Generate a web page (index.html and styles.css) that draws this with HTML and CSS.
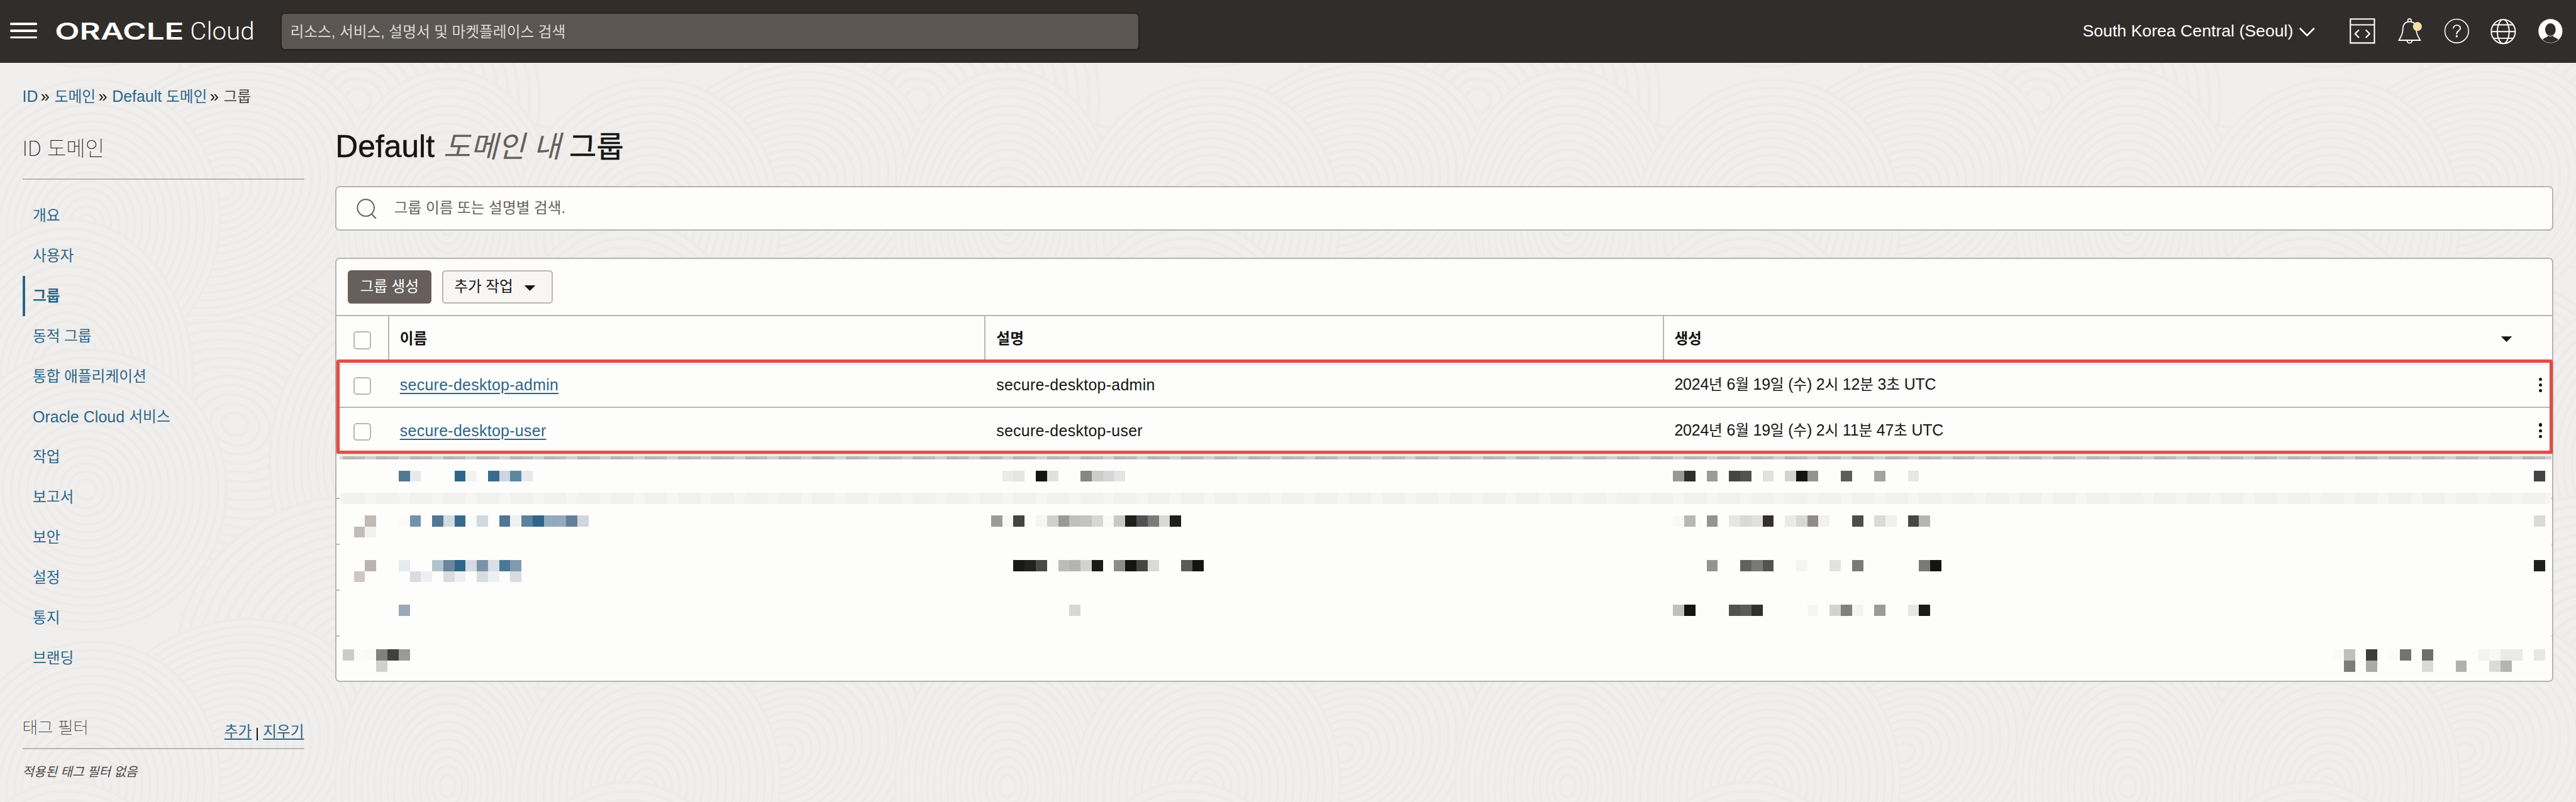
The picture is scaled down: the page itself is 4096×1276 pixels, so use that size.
FILE: index.html
```html
<!DOCTYPE html>
<html lang="ko">
<head>
<meta charset="utf-8">
<title>Default 도메인 내 그룹</title>
<link rel="stylesheet" href="styles.css">
</head>
<body>
<header class="topbar">
  <div class="burger"><i></i><i></i><i></i></div>
  <svg class="logo" width="360" height="50" viewBox="0 0 360 50">
    <text class="logo-brand" x="-2" y="40" textLength="231" lengthAdjust="spacingAndGlyphs">ORACLE</text>
    <text class="logo-product" x="240" y="40" textLength="115" lengthAdjust="spacingAndGlyphs">Cloud</text>
  </svg>
  <div class="global-search ko">리소스, 서비스, 설명서 및 마켓플레이스 검색</div>
  <div class="region">South Korea Central (Seoul)
    <svg width="30" height="18" viewBox="0 0 30 18"><path d="M2 2l13 13L28 2" fill="none" stroke="#fff" stroke-width="3"/></svg>
  </div>
  <nav class="tools">
    <svg width="48" height="48" viewBox="-24 -24 48 48"><path d="M-21.500-21.500h43v43h-43zM-21.500-11h43M-6-2l-7 7 7 7M6-2l7 7-7 7" fill="none" stroke="#fff" stroke-width="2.400"/></svg>
    <svg width="48" height="48" viewBox="-24 -24 48 48"><g fill="none" stroke="#fff" stroke-width="2"><path d="M-19 16.500h38c-4-7-7-11-7-19 0-9-4-14-12-14s-12 5-12 14c0 8-3 12-7 19z"/><path d="M-3-16v-3a3 3 0 0 1 6 0v3M-4.500 17a4.500 4.500 0 0 0 9 0"/></g><circle cx="14" cy="-8" r="8" fill="#f4dfa5"/></svg>
    <svg width="48" height="48" viewBox="-24 -24 48 48"><circle r="21.200" fill="none" stroke="#fff" stroke-width="1.800"/><path d="M-6-4.500c0-8 12.500-7.500 12.500-.5 0 4.500-6.500 5-6.500 9.500v1.500" fill="none" stroke="#fff" stroke-width="2.200"/><circle cy="9.500" r="1.900" fill="#fff"/></svg>
    <svg width="48" height="48" viewBox="-24 -24 48 48"><g transform="translate(0 1)" fill="none" stroke="#fff" stroke-width="2.200"><circle r="21.500"/><ellipse rx="10.500" ry="21.500"/><path d="M-21.500 0h43M-18-12h36M-18 12h36"/></g></svg>
    <svg width="48" height="48" viewBox="-24 -24 48 48"><circle r="21.500" fill="#fff"/><ellipse cy="-2.500" rx="9.500" ry="11.500" fill="#312d2a"/><path d="M-14 15.500C-11 11-5 12-4.500 8 -2 10 2 10 4.500 8 5 12 11 11 14 15.500A20.600 20.600 0 0 1-14 15.500z" fill="#312d2a"/></svg>
  </nav>
</header>

<div class="crumbs">
  <a>ID</a><span class="sep">»</span><a class="ko">도메인</a><span class="sep">»</span><a>Default <span class="ko">도메인</span></a><span class="sep">»</span><span class="ko here">그룹</span>
</div>

<div class="columns">
  <aside class="side">
    <h2 class="side-title">ID <span>도메인</span></h2>
    <ul class="menu">
      <li><span class="ko">개요</span></li>
      <li><span class="ko">사용자</span></li>
      <li class="on"><span class="ko">그룹</span></li>
      <li><span class="ko">동적 그룹</span></li>
      <li><span class="ko">통합 애플리케이션</span></li>
      <li class="mixed">Oracle Cloud&nbsp;<span class="ko">서비스</span></li>
      <li><span class="ko">작업</span></li>
      <li><span class="ko">보고서</span></li>
      <li><span class="ko">보안</span></li>
      <li><span class="ko">설정</span></li>
      <li><span class="ko">통지</span></li>
      <li><span class="ko">브랜딩</span></li>
    </ul>
    <div class="filter-head">
      <h3>태그 필터</h3>
      <div class="filter-links"><a class="ko">추가</a><i></i><a class="ko">지우기</a></div>
    </div>
    <p class="filter-none">적용된 태그 필터 없음</p>
  </aside>

  <main class="main">
    <h1>Default <em class="ko">도메인 내</em> <span class="ko">그룹</span></h1>
    <div class="find">
      <svg width="36" height="38" viewBox="0 0 36 38"><circle cx="16.500" cy="17.500" r="15" fill="none" stroke="#665f5b" stroke-width="2.200"/><path d="M26.500 28.500l8 8" stroke="#665f5b" stroke-width="2.400"/></svg>
      <span class="ko">그룹 이름 또는 설명별 검색.</span>
    </div>

    <section class="table">
      <div class="actions">
        <button class="btn primary"><span class="ko">그룹 생성</span></button>
        <button class="btn"><span class="ko">추가 작업</span><i class="caret"></i></button>
      </div>
      <div class="row head">
        <div class="cell check"><i class="box"></i></div>
        <div class="cell name ko">이름</div>
        <div class="cell desc ko">설명</div>
        <div class="cell made"><span class="ko">생성</span><i class="caret"></i></div>
      </div>
      <div class="row">
        <div class="cell check"><i class="box"></i></div>
        <div class="cell name"><a>secure-desktop-admin</a></div>
        <div class="cell desc">secure-desktop-admin</div>
        <div class="cell made"><span>2024<b>년</b> 6<b>월</b> 19<b>일</b> (<b>수</b>) 2<b>시</b> 12<b>분</b> 3<b>초</b> UTC</span><span class="kebab"><i></i><i></i><i></i></span></div>
      </div>
      <div class="row">
        <div class="cell check"><i class="box"></i></div>
        <div class="cell name"><a>secure-desktop-user</a></div>
        <div class="cell desc">secure-desktop-user</div>
        <div class="cell made"><span>2024<b>년</b> 6<b>월</b> 19<b>일</b> (<b>수</b>) 2<b>시</b> 11<b>분</b> 47<b>초</b> UTC</span><span class="kebab"><i></i><i></i><i></i></span></div>
      </div>
      <svg class="masked" id="masked" width="3964" height="406" viewBox="602 812 3964 406" shape-rendering="crispEdges"></svg>
      <div class="highlight"></div>
    </section>
  </main>
</div>
<script src="mosaic.js"></script>
</body>
</html>
```
FILE: styles.css
```css
* { box-sizing: border-box; margin: 0; padding: 0; }

html { background: #f0efed; overflow: hidden; }

/* Designed on a 4608px canvas, shown at 8/9 of that size. */
body {
  --line: 2.3px;
  zoom: 0.888888;
  width: 4608px;
  height: 1435.5px;
  overflow: hidden;
  font-family: "Liberation Sans", "Noto Sans CJK KR", sans-serif;
  font-size: 28px;
  line-height: 40px;
  color: #161513;
  /* contour-line texture, one 1002x1007 tile */
  background: #f0efed 0 0 / 1002px 1007px url("data:image/svg+xml,%3Csvg xmlns='http://www.w3.org/2000/svg' width='1002' height='1007' viewBox='0 0 1002 1007'%3E%3Cdefs%3E%3Cg id='r'%3E%3Ccircle r='250'/%3E%3Ccircle r='236'/%3E%3Ccircle r='221'/%3E%3Ccircle r='207'/%3E%3Ccircle r='192'/%3E%3Ccircle r='178'/%3E%3Ccircle r='163'/%3E%3Ccircle r='149'/%3E%3Ccircle r='134'/%3E%3Ccircle r='120'/%3E%3Ccircle r='105'/%3E%3Ccircle r='91'/%3E%3Ccircle r='76'/%3E%3Ccircle r='62'/%3E%3Ccircle r='47'/%3E%3Ccircle r='33'/%3E%3Ccircle r='18'/%3E%3C/g%3E%3Cg id='h' fill='%23f0efed' stroke='%23ecebe9' stroke-width='4.500'%3E%3Cuse href='%23r' transform='translate(640 180) scale(1.3 1.2)'/%3E%3Cuse href='%23r' transform='translate(930 560) scale(1.2 1.35)'/%3E%3Cuse href='%23r' transform='translate(420 760) rotate(20) scale(1.35 1.1)'/%3E%3Cuse href='%23r' transform='translate(154 -130)'/%3E%3Cuse href='%23r' transform='translate(400 340) rotate(-30) scale(1.1 .9)'/%3E%3Cuse href='%23r' transform='translate(720 830) scale(.95 1.2)'/%3E%3Cuse href='%23r' transform='translate(154 403) rotate(15) scale(.95 1.05)'/%3E%3Cuse href='%23r' transform='translate(800 400) scale(.8 1.1)'/%3E%3Cuse href='%23r' transform='translate(120 680) scale(.9 1.15)'/%3E%3C/g%3E%3C/defs%3E%3Cuse href='%23h' x='-1002' y='-1007'/%3E%3Cuse href='%23h' y='-1007'/%3E%3Cuse href='%23h' x='1002' y='-1007'/%3E%3Cuse href='%23h' x='-1002'/%3E%3Cuse href='%23h'/%3E%3Cuse href='%23h' x='1002'/%3E%3Cuse href='%23h' x='-1002' y='1007'/%3E%3Cuse href='%23h' y='1007'/%3E%3Cuse href='%23h' x='1002' y='1007'/%3E%3C/svg%3E");
}

.ko, .row b { font-size: 0.951em; }
i { font-style: normal; }
a { color: #2c6589; }

/* Top bar */
.topbar {
  display: flex;
  align-items: center;
  height: 112px;
  padding: 0 22px 0 18px;
  background: #312d2a;
  color: #fff;
}
.burger { display: flex; flex-direction: column; gap: 8px; width: 48px; margin: 0 34px 2px 0; }
.burger i { height: 4px; border-radius: 2px; background: #fff; }
.logo { flex: none; margin-bottom: 1px; overflow: visible; }
.logo-brand { font: 600 41px Inter, sans-serif; fill: #fff; }
.logo-product { font: 300 43px Roboto, sans-serif; fill: #fff; }
.global-search {
  width: 1536px;
  height: 68px;
  margin-left: 42px;
  padding: 0 15px;
  line-height: 66px;
  border: var(--line) solid #26221f;
  border-radius: 8px;
  background: #5b5652;
  color: #dddad7;
}
.region { display: flex; align-items: center; gap: 10px; margin-left: auto; font-size: 30px; white-space: nowrap; }
.region svg { margin-top: 3px; }
.tools { display: flex; gap: 36px; margin-left: 60px; }

/* Breadcrumbs */
.crumbs { display: flex; align-items: baseline; height: 106px; padding: 41px 0 0 40px; }
.crumbs .sep { margin: 0 9px 0 5px; }
.crumbs .here { color: #45403c; }

.columns { display: flex; gap: 56px; padding-left: 40px; }

/* Side navigation */
.side { width: 504px; }
.side-title {
  height: 104px;
  padding-top: 22px;
  border-bottom: var(--line) solid #bbb6b1;
  font: 100 37.500px/48px "Noto Sans CJK KR", sans-serif;
  letter-spacing: -0.3px;
  color: #161513;
}
.menu { list-style: none; margin-top: 28px; }
.menu li {
  display: flex;
  align-items: center;
  height: 72px;
  padding: 2px 0 0 14px;
  border-left: 4.6px solid transparent;
  color: #2c6589;
}
.menu .on { border-color: #2c6589; font-weight: 700; }
.menu .mixed { letter-spacing: 0.1px; }
.filter-head {
  display: flex;
  justify-content: space-between;
  height: 127px;
  padding-top: 62px;
  border-bottom: var(--line) solid #bbb6b1;
}
.filter-head h3 { font: 100 30px/50px "Noto Sans CJK KR", sans-serif; color: #161513; }
.filter-links { display: flex; align-items: center; margin-top: 15px; height: 40px; }
.filter-links a { text-decoration: underline; text-underline-offset: 3px; }
.filter-links i { width: 2.25px; height: 22px; margin: 6px 9px 0; background: #161513; }
.filter-none { padding-top: 22px; font-size: 22.600px; font-style: italic; color: #4b4642; }

/* Main column */
.main { width: 3968px; }
h1 {
  height: 115px;
  padding-top: 8px;
  font-size: 56px;
  line-height: 72px;
  font-weight: 400;
  white-space: nowrap;
  -webkit-text-stroke: 0.6px currentColor;
}
h1 em { color: #665f5b; -webkit-text-stroke: 0; }
h1 .ko { font-size: 53px; }

.find {
  display: flex;
  align-items: center;
  gap: 31px;
  height: 80px;
  padding-left: 36px;
  border: var(--line) solid #b8b3ae;
  border-radius: 8px;
  background: #fdfdfb;
  color: #665f5b;
}

.table {
  position: relative;
  height: 760px;
  margin-top: 48px;
  border: var(--line) solid #b8b3ae;
  border-radius: 8px;
  background: #fdfdfb;
}
.actions { display: flex; gap: 20px; height: 103px; padding: 20px 20px 0; border-bottom: var(--line) solid #bbb6b1; }
.btn {
  display: flex;
  align-items: center;
  justify-content: center;
  gap: 20px;
  width: 198px;
  height: 60px;
  padding: 1px 10px 0 0;
  border: var(--line) solid #bbb6b1;
  border-radius: 6px;
  background: #f7f6f5;
  font: 28px/40px "Liberation Sans", "Noto Sans CJK KR", sans-serif;
  color: #161513;
}
.btn.primary { width: 149px; padding-right: 0; border-color: #665f5b; background: #665f5b; color: #fff; }
.caret { width: 20px; height: 10px; background: #161513; clip-path: polygon(0 0, 100% 0, 50% 100%); }
.btn .caret { margin-top: 4px; }

.row { display: flex; height: 82px; border-bottom: var(--line) solid #bbb6b1; }
.cell { display: flex; align-items: center; white-space: nowrap; }
.check { width: 94px; padding-left: 30px; }
.name { width: 1067px; padding: 2px 0 0 19px; }
.desc { width: 1214px; padding: 2px 0 0 19px; }
.name, .desc, .check { flex: none; }
.made { flex: 1; justify-content: space-between; padding: 2px 18px 0 18px; }
.made > span:first-child { letter-spacing: -0.18px; }
.row a, .desc { letter-spacing: 0.36px; }
.row a { text-decoration: underline; text-underline-offset: 4px; }
.row b { font-weight: 400; }
.head .cell { border-right: var(--line) solid #bbb6b1; font-weight: 700; }
.head .made { border-right: 0; padding-right: 72px; }
.box { width: 32px; height: 32px; margin-top: 6px; border: var(--line) solid #bbb6b1; border-radius: 6px; background: #fefefd; }
.kebab { display: flex; flex-direction: column; gap: 4.500px; }
.kebab i { width: 6px; height: 6px; border-radius: 50%; background: #161513; }

.masked { display: block; }

/* Callout frame lying over the first two rows */
.highlight {
  position: absolute;
  left: 0;
  top: 180px;
  width: 3964px;
  height: 169px;
  border: 5.7px solid #e84a46;
  border-radius: 4px;
  box-shadow: 0 2px 5px rgba(0, 0, 0, 0.15), inset 0 2px 5px rgba(0, 0, 0, 0.12);
}
```
FILE: mosaic.js
```js
// Redacted rows: 20px blocks, given as "row: column, colour" on a grid whose origin is (613, 822).
const svg = document.getElementById('masked');
const draw = (x, y, w, h, fill) => {
  const r = document.createElementNS('http://www.w3.org/2000/svg', 'rect');
  Object.entries({ x, y, width: w, height: h, fill }).forEach(([k, v]) => r.setAttribute(k, v));
  svg.appendChild(r);
};

const strip = ['#bbb5af', '#c0bbb5', '#d0d0cc'];
const band = ['#f2f1ef', '#f2f1ef', '#f5f5f3'];
draw(607, 817, 6, 5, '#d8d8d5');
draw(607, 882, 6, 20, '#f7f7f6');
for (let k = 0; k < 198; k++) {
  const x = 613 + 20 * k;
  const w = Math.min(20, 4564 - x);
  draw(x, 817, w, 5, strip[k % 3]);
  draw(x, 882, w, 20, band[k % 3]);
}
[892, 974, 1056, 1138].forEach(y => {
  draw(602, y - 1, 5, 2.25, '#bbb6b1');
  draw(4564, y - 1, 2, 2.25, '#bbb6b1');
});

const blocks = {
  1: '5 527894,6 e5eaed,10 2d6688,11 f1f3f3,13 376b8f,14 cbd6df,15 5b87a1,16 e5eaee,59 eaeae9,60 e4e4e3,62 161411,63 e0e0df,66 888684,67 cccccb,68 d5d5d6,69 e4e4e3,119 989898,120 302e2b,122 9c9b99,124 474543,125 53524f,127 e0e0df,129 d3d3d2,130 161411,131 949392,134 5e5d5c,137 a3a3a2,140 e6e6e5,196 454344',
  5: '2 c1bab5,5 fbfbfc,6 7392a8,8 527693,9 d3dae2,10 356c8e,11 f9fafa,12 d2d8e0,14 527693,15 eff1f0,16 5b839c,17 2d6688,18 92aabb,19 9aa9b9,20 60809b,21 d0d4dd,58 9c9c9b,59 f7f7f6,60 454341,62 f5f5f4,63 d0d0cf,64 989896,65 c0c0bf,66 c3c3c2,67 d7d7d6,68 f9f9f8,69 c8c8c7,70 1f1e1b,71 525151,72 7d7b79,73 d8d8d7,74 1f1e1c,119 f9f9f8,120 b7b7b6,122 959492,124 e6e6e5,125 d9d9d8,126 e0e0df,127 33312f,129 eaeae9,130 d7d7d6,131 8e8d8b,132 f1f1f0,135 4e4d4b,137 dadad9,138 f0f0ef,140 484644,141 b5b5b5,196 dadad9',
  6: '1 c2bbb6,2 f2f1f0',
  9: '2 bab4b0,5 e5ecf0,8 b4c4ce,9 69869c,10 2d6688,11 d1dbe1,12 7c93a7,13 d6e0e5,14 4a7896,15 8399ae,60 1a1815,61 22211f,62 4a4947,64 bcbcbb,65 b4b4b3,66 d3d3d2,67 1c1b18,69 8e8d8b,70 161411,71 484644,72 d9d9d8,75 5c5b59,76 161411,122 959492,125 626160,126 7b7a78,127 545250,130 f4f4f3,133 e2e2e1,135 7b7a78,141 7b7a78,142 161411,196 1f1e1b',
  10: '1 cdc8c6,6 d7dce0,7 eeeff1,9 d7dce0,10 eeeff2,12 d7dce0,13 eeeff2,15 d7dce0',
  13: '5 9ba8b8,65 d7d7d7,119 c0c0bf,120 161411,124 53524f,125 5c5b59,126 33312e,131 f5f5f4,133 d3d3d2,134 82817f,135 f3f3f2,137 9c9b99,140 e6e6e5,141 1c1b18',
  17: '0 cbcbca,1 fafafa,2 f9f9f8,3 82817e,4 42403e,5 9a9a98,178 fafafa,179 bfbfbe,181 3e3d3b,183 fbfbfa,184 747372,186 6f6e6d,191 f3f3f2,192 f8f8f7,193 eaeae9,194 eaeae9,196 e7e7e6',
  18: '3 d0d0cf,179 7d7c7a,181 aaaaa9,186 dadad9,189 b0b0af,192 dadad9,193 b4b4b3'
};
for (const [row, cells] of Object.entries(blocks)) {
  cells.split(',').forEach(c => {
    const [col, colour] = c.split(' ');
    draw(613 + 20 * col, 822 + 20 * row, 20, 20, '#' + colour);
  });
}
```
